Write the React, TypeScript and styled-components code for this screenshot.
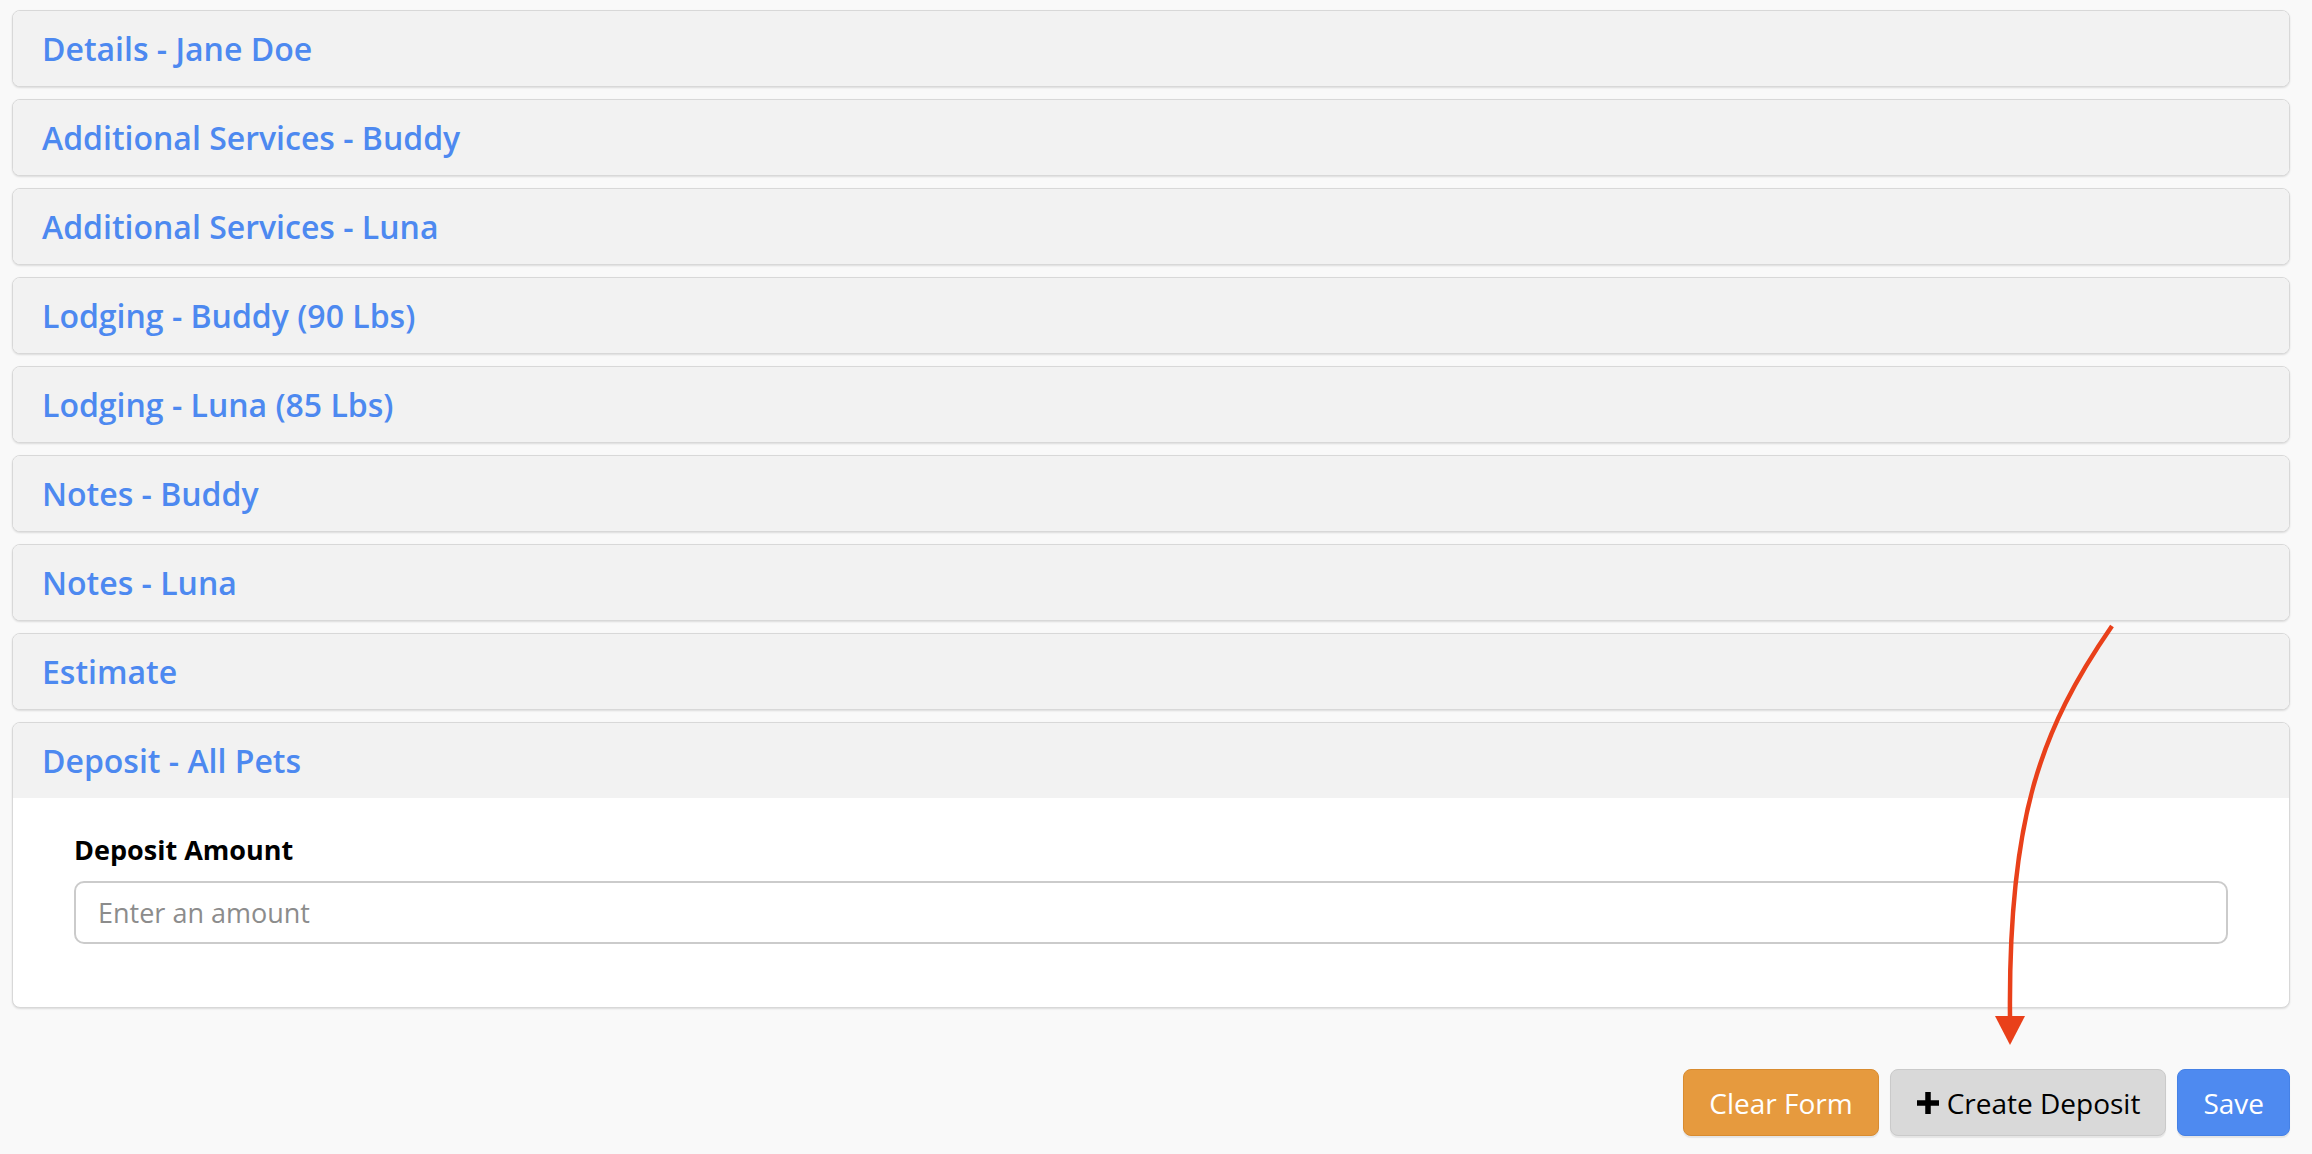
import React from 'react';
import {styled, createGlobalStyle} from 'styled-components';

const sections = [
  'Details - Jane Doe',
  'Additional Services - Buddy',
  'Additional Services - Luna',
  'Lodging - Buddy (90 Lbs)',
  'Lodging - Luna (85 Lbs)',
  'Notes - Buddy',
  'Notes - Luna',
  'Estimate',
];

const GlobalStyle = createGlobalStyle`
  html, body {
    margin: 0;
    padding: 0;
    background: #f9f9f9;
    font-family: "Open Sans", "Liberation Sans", sans-serif;
  }
  * { box-sizing: border-box; }
`;

export default function App() {
  return (
    <Page>
      <GlobalStyle />
      <Stack>
        {sections.map((title) => (
          <Card key={title}>
            <CardHeader>{title}</CardHeader>
          </Card>
        ))}
        <Card>
          <CardHeader>Deposit - All Pets</CardHeader>
          <CardBody>
            <Label htmlFor="deposit">Deposit Amount</Label>
            <Input id="deposit" placeholder="Enter an amount" />
          </CardBody>
        </Card>
      </Stack>
      <Actions>
        <Button $variant="warning">Clear Form</Button>
        <Button $variant="default">
          <PlusIcon />
          Create Deposit
        </Button>
        <Button $variant="primary">Save</Button>
      </Actions>
      <Annotation />
    </Page>
  );
}

const PlusIcon = () => (
  <svg width="24" height="24" viewBox="0 0 24 24" aria-hidden>
    <path d="M12 1v22M1 12h22" stroke="#000" strokeWidth="5.5" />
  </svg>
);

// red callout arrow drawn over the page
const Annotation = () => (
  <Overlay width="2312" height="1154" viewBox="0 0 2312 1154">
    <path
      d="M2112 626 C2040 730 2008 820 2010 1018"
      fill="none"
      stroke="#e9401a"
      strokeWidth="4.5"
    />
    <polygon points="1995,1016 2025,1016 2010,1045" fill="#e9401a" />
  </Overlay>
);

const Page = styled.div`
  position: relative;
  min-height: 1154px;
  padding: 10px 22px 17px 12px;
`;

const Stack = styled.div`
  display: flex;
  flex-direction: column;
  gap: 12px;
`;

const Card = styled.section`
  border: 1px solid #d8d8d8;
  border-radius: 8px;
  background: #fff;
  overflow: hidden;
  box-shadow: 0 1px 2px rgba(0, 0, 0, 0.12);
`;

const CardHeader = styled.div`
  height: 75px;
  display: flex;
  align-items: center;
  padding: 0 29px;
  background: #f2f2f2;
  color: #4d89f0;
  font-size: 32px;
  font-weight: 600;
`;

const CardBody = styled.div`
  display: flex;
  flex-direction: column;
  padding: 33px 61px 63px;
`;

const Label = styled.label`
  font-size: 27px;
  font-weight: 700;
  line-height: 37px;
  color: #000;
  margin-bottom: 13px;
`;

const Input = styled.input`
  height: 63px;
  border: 2px solid #cbcbcb;
  border-radius: 10px;
  padding: 0 22px;
  font-family: inherit;
  font-size: 27px;
  color: #333;
  outline: none;
  &::placeholder {
    color: #8c8c8c;
  }
`;

const Actions = styled.div`
  display: flex;
  justify-content: flex-end;
  gap: 11px;
  margin-top: 61px;
`;

const variants = {
  warning: {bg: '#e69a3e', border: '#d98c30', color: '#fff'},
  default: {bg: '#d9d9d9', border: '#cacaca', color: '#000'},
  primary: {bg: '#4e8af0', border: '#4581e6', color: '#fff'},
};

const Button = styled.button<{$variant: keyof typeof variants}>`
  height: 67px;
  display: inline-flex;
  align-items: center;
  gap: 7px;
  padding: 0 25px;
  border-radius: 8px;
  border: 1px solid ${({$variant}) => variants[$variant].border};
  background: ${({$variant}) => variants[$variant].bg};
  color: ${({$variant}) => variants[$variant].color};
  font-family: inherit;
  font-size: 28px;
  box-shadow: 0 2px 1px rgba(0, 0, 0, 0.08);
  cursor: pointer;
`;

const Overlay = styled.svg`
  position: absolute;
  top: 0;
  left: 0;
  pointer-events: none;
`;
